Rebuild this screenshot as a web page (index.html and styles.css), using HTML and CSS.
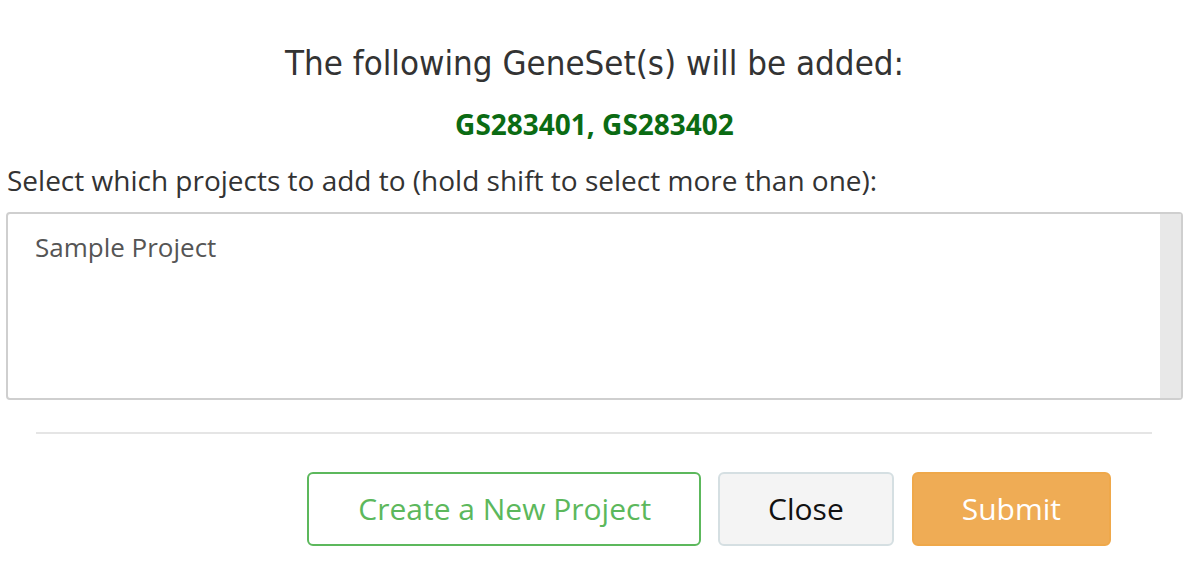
FILE: index.html
```html
<!DOCTYPE html>
<html>
<head>
<meta charset="utf-8">
<link rel="stylesheet" href="styles.css">
</head>
<body>
<div class="modal">
  <h1 class="title">The following GeneSet(s) will be added:</h1>
  <p class="ids">GS283401, GS283402</p>
  <p class="label">Select which projects to add to (hold shift to select more than one):</p>
  <div class="select">
    <div class="options">
      <div class="option">Sample Project</div>
    </div>
    <div class="track"></div>
  </div>
  <div class="footer">
    <button class="btn btn-create">Create a New Project</button>
    <button class="btn btn-close">Close</button>
    <button class="btn btn-submit">Submit</button>
  </div>
</div>
</body>
</html>
```
FILE: styles.css
```css
html, body {
  margin: 0;
  padding: 0;
  background: #fff;
}
.modal {
  padding: 0 7px 0 6px;
  font-family: "Open Sans", sans-serif;
  color: #333;
}
.title {
  margin: 0;
  padding-top: 38px;
  text-align: center;
  font-family: "DejaVu Sans Condensed", "DejaVu Sans", sans-serif;
  font-stretch: condensed;
  font-weight: normal;
  font-size: 34.6px;
  line-height: 50px;
  color: #333;
}
.ids {
  margin: 18px 0 0;
  text-align: center;
  font-size: 28px;
  font-weight: bold;
  line-height: 36px;
  color: #0b6b13;
}
.label {
  margin: 19px 0 0 1px;
  font-size: 28px;
  line-height: 38px;
  color: #333;
}
.select {
  margin-top: 13px;
  height: 188px;
  box-sizing: border-box;
  border: 2px solid #cfcfcf;
  border-radius: 4px;
  display: flex;
}
.options {
  flex: 1;
  padding: 15px 27px;
}
.option {
  font-size: 26px;
  line-height: 36px;
  color: #555;
}
.track {
  width: 21px;
  background: #e8e8e8;
}
.footer {
  margin: 32px 31px 0 30px;
  border-top: 2px solid #e5e5e5;
  padding: 38px 41px 0 0;
  display: flex;
  justify-content: flex-end;
  gap: 18px;
}
.btn {
  font-family: "Open Sans", sans-serif;
  font-size: 30px;
  line-height: 40px;
  padding: 15px 48px;
  border: 2px solid transparent;
  border-radius: 6px;
  cursor: pointer;
}
.btn-create {
  padding: 15px 48px 15px 49px;
  margin-right: -1px;
  background: #fff;
  border-color: #5cb85c;
  color: #5cb85c;
}
.btn-close {
  background: #f4f4f4;
  border-color: #d5dfe2;
  color: #111;
}
.btn-submit {
  background: #efac55;
  border-color: #efa84a;
  color: #fff;
}
```
